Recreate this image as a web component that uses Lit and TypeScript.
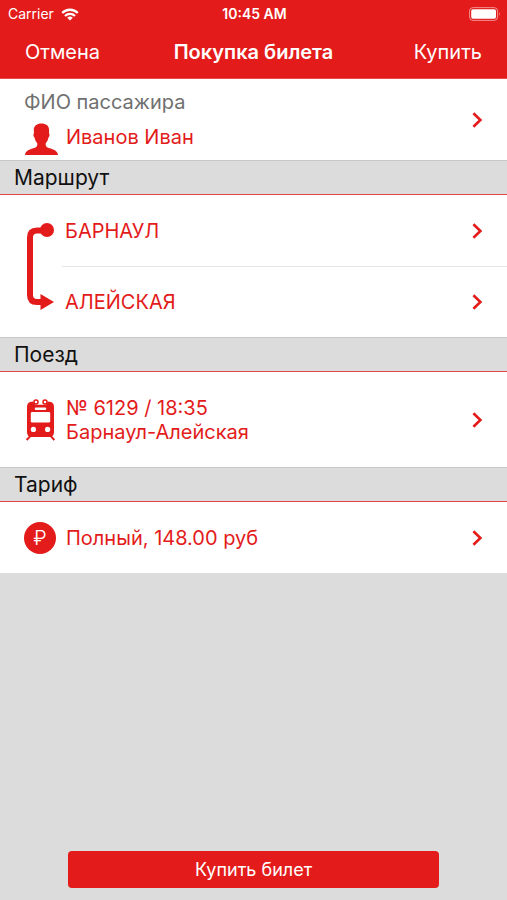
import { LitElement, html, css } from "lit";
import { customElement } from "lit/decorators.js";

const chevron = html`<svg class="chevron" viewBox="0 0 12 18" aria-hidden="true">
  <path d="M2.4 2.2 L9.4 9 L2.4 15.8" fill="none" stroke="currentColor" stroke-width="2.6" />
</svg>`;

const wifiIcon = html`<svg class="wifi" viewBox="0 0 18 13" aria-hidden="true">
  <g fill="none" stroke="currentColor" stroke-width="2.3">
    <path d="M1.2 5 A11 11 0 0 1 16.8 5" />
    <path d="M4 8 A7 7 0 0 1 14 8" />
  </g>
  <path d="M9 12.6 L6.2 9.8 A4 4 0 0 1 11.8 9.8 Z" fill="currentColor" />
</svg>`;

const batteryIcon = html`<svg class="battery" viewBox="0 0 32 14" aria-hidden="true">
  <rect x="0.6" y="0.6" width="28" height="12.8" rx="3.4" fill="none" stroke="#fff" stroke-opacity="0.5" />
  <rect x="2.2" y="2.2" width="24.8" height="9.6" rx="1.8" fill="#fff" />
  <path d="M30 5 Q31.6 7 30 9 Z" fill="#fff" fill-opacity="0.6" />
</svg>`;

const personIcon = html`<svg class="person" viewBox="0 -4 34 36" aria-hidden="true">
  <path fill="currentColor" d="M17.4 0.4 C21.8 0.4 25.2 2.4 25.1 7 L25 10.4 C26 10.6 25.6 13.6 24.5 14.4 C24 17 23 18.8 21.8 20 C21.4 22.4 22 24 24 24.8 C28.6 26.4 33.4 27 34 32 L1 32 C1.6 27 6.4 26.4 11 24.8 C13 24 13.6 22.4 13.2 20 C12 18.8 11 17 10.5 14.4 C9.4 13.6 9 10.6 10 10.4 L9.8 6.6 C9.8 2.8 13 0.4 17.4 0.4 Z" />
</svg>`;

const routeIcon = html`<svg class="route-icon" viewBox="0 -1 28 88" aria-hidden="true">
  <path d="M21 7.5 H11 Q4 7.5 4 14.5 V72 Q4 79 11 79 H16" fill="none" stroke="currentColor" stroke-width="6" />
  <circle cx="21" cy="7" r="7" fill="currentColor" />
  <path d="M14.5 71 L28 79 L14.5 87 Z" fill="currentColor" />
</svg>`;

const trainIcon = html`<svg class="train" viewBox="0 0 32 42" aria-hidden="true">
  <g fill="none" stroke="currentColor" stroke-width="1.5">
    <circle cx="12" cy="3" r="2" />
    <circle cx="21" cy="3" r="2" />
    <path d="M7 36.4 L2.6 41 M26 36.4 L30.4 41" stroke-width="2" />
  </g>
  <path fill="currentColor" d="M6 3 L9.4 2.4 Q10 5.8 12.6 5.8 H20.4 Q23 5.8 23.6 2.4 L27 3 Q30 4 30 8 V33 Q30 38 25.4 38 H7.6 Q3 38 3 33 V8 Q3 4 6 3 Z" />
  <rect x="10.8" y="8.6" width="11.4" height="2.4" rx="1" fill="#fff" />
  <rect x="6.8" y="13" width="19.4" height="10.6" rx="1.4" fill="#fff" />
  <circle cx="9.4" cy="30.4" r="2.6" fill="#fff" />
  <circle cx="23.6" cy="30.4" r="2.6" fill="#fff" />
</svg>`;

@customElement("app-root")
export class AppRoot extends LitElement {
  static styles = css`
    :host {
      --red: #e31b1b;
      display: flex;
      flex-direction: column;
      min-height: 100vh;
      background: #dcdcdc;
      font-family: Inter, "Liberation Sans", sans-serif;
      font-size: 20px;
      line-height: 24px;
      color: #111;
    }
    * {
      box-sizing: border-box;
    }
    button {
      margin: 0;
      padding: 0;
      border: 0;
      background: none;
      font: inherit;
      color: inherit;
      text-align: left;
      cursor: pointer;
    }
    svg {
      display: block;
      flex: none;
    }
    .top {
      background: var(--red);
      color: #fff;
      border-bottom: 1px solid #e84a4a;
    }
    .status {
      display: grid;
      grid-template-columns: 1fr auto 1fr;
      align-items: center;
      height: 28px;
      padding: 0 6px 0 8px;
      font-size: 14px;
      line-height: 20px;
    }
    .carrier {
      display: flex;
      align-items: center;
      gap: 7px;
    }
    .time {
      font-weight: 600;
    }
    .wifi {
      width: 18px;
      height: 13px;
    }
    .battery {
      width: 32px;
      height: 14px;
      justify-self: end;
    }
    .nav {
      display: grid;
      grid-template-columns: 1fr auto 1fr;
      align-items: center;
      height: 50px;
      padding: 0 25px 2px;
    }
    .nav h1 {
      margin: 0;
      font-size: 20px;
      line-height: 24px;
      font-weight: 600;
    }
    .nav .buy {
      justify-self: end;
    }
    .row {
      display: flex;
      align-items: center;
      width: 100%;
      min-height: 71px;
      padding: 0 24px;
      background: #fff;
      color: var(--red);
    }
    .grow {
      flex: 1;
      min-width: 0;
    }
    .chevron {
      width: 12px;
      height: 18px;
    }
    .passenger {
      min-height: 81px;
    }
    .passenger .grow {
      padding-top: 11px;
    }
    .label {
      display: block;
      color: #707070;
    }
    .name {
      display: flex;
      align-items: center;
      gap: 8px;
      height: 46px;
    }
    .person {
      width: 34px;
      height: 36px;
    }
    h2 {
      margin: 0;
      height: 35px;
      padding: 4px 14px;
      border-top: 1px solid #c8c8c8;
      border-bottom: 1px solid #e04848;
      font-size: 21px;
      line-height: 26px;
      font-weight: 400;
    }
    .route {
      display: flex;
      align-items: center;
      background: #fff;
      color: var(--red);
      padding-left: 26px;
    }
    .route-icon {
      width: 28px;
      height: 88px;
    }
    .stops {
      flex: 1;
      margin-left: 8px;
    }
    .stops .row {
      padding-left: 3px;
    }
    .stops .row + .row {
      border-top: 1px solid #e6e6e6;
    }
    .glyph {
      display: flex;
      flex: none;
      width: 42px;
    }
    .train {
      width: 32px;
      height: 42px;
    }
    .tall {
      min-height: 95px;
    }
    .line {
      display: block;
    }
    .coin {
      display: flex;
      align-items: center;
      justify-content: center;
      width: 32px;
      height: 32px;
      border-radius: 50%;
      background: var(--red);
      color: #fff;
      font-size: 20px;
      font-weight: 300;
    }
    .footer {
      margin-top: auto;
      padding: 12px 68px;
    }
    .primary {
      display: block;
      width: 100%;
      height: 37px;
      border-radius: 4px;
      background: var(--red);
      color: #fff;
      font-size: 18px;
      text-align: center;
    }
  `;

  render() {
    return html`
      <header class="top">
        <div class="status">
          <span class="carrier">Carrier ${wifiIcon}</span>
          <span class="time">10:45 AM</span>
          ${batteryIcon}
        </div>
        <nav class="nav">
          <button>Отмена</button>
          <h1>Покупка билета</h1>
          <button class="buy">Купить</button>
        </nav>
      </header>
      <main>
        <button class="row passenger">
          <span class="grow">
            <span class="label">ФИО пассажира</span>
            <span class="name">${personIcon}<span>Иванов Иван</span></span>
          </span>
          ${chevron}
        </button>
        <h2>Маршрут</h2>
        <div class="route">
          ${routeIcon}
          <div class="stops">
            <button class="row"><span class="grow">БАРНАУЛ</span>${chevron}</button>
            <button class="row"><span class="grow">АЛЕЙСКАЯ</span>${chevron}</button>
          </div>
        </div>
        <h2>Поезд</h2>
        <button class="row tall">
          <span class="glyph">${trainIcon}</span>
          <span class="grow">
            <span class="line">№ 6129 / 18:35</span>
            <span class="line">Барнаул-Алейская</span>
          </span>
          ${chevron}
        </button>
        <h2>Тариф</h2>
        <button class="row">
          <span class="glyph"><span class="coin" aria-hidden="true">₽</span></span>
          <span class="grow">Полный, 148.00 руб</span>
          ${chevron}
        </button>
      </main>
      <footer class="footer">
        <button class="primary">Купить билет</button>
      </footer>
    `;
  }
}
